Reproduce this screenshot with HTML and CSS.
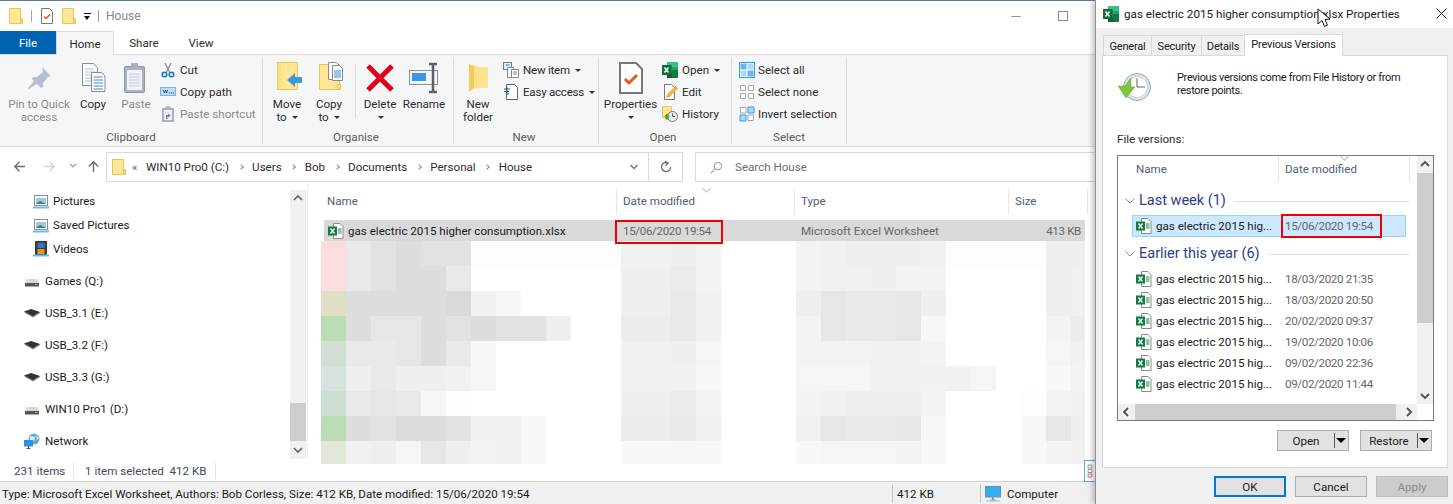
FILE: index.html
```html
<!DOCTYPE html>
<html lang="en">
<head>
<meta charset="utf-8">
<title>House</title>
<link rel="stylesheet" href="styles.css">
</head>
<body>
<svg class="sprite" xmlns="http://www.w3.org/2000/svg">
  <symbol id="folder" viewBox="0 0 16 16"><path d="M1.500 .5h11v15h-11z" fill="#ffe694" stroke="#e6c65a"/><path d="M12.500 10.500h2v5h-2z" fill="#fbd976" stroke="#e6c65a"/></symbol>
  <symbol id="checkdoc" viewBox="0 0 16 16"><path d="M2.500 .5h8l3 3v12h-11z" fill="#fff" stroke="#777"/><path d="M5 8.500l2 2 4-4" fill="none" stroke="#e8561c" stroke-width="1.500"/></symbol>
  <symbol id="xl" viewBox="0 0 16 16"><path d="M5.500 .5h6.500l3 3v12h-9.500z" fill="#fff" stroke="#8a8a8a"/><path d="M10 6h3.500M10 8h3.500M10 10h3.500" stroke="#2a7a4a"/><rect x="0" y="3.500" width="9" height="9" fill="#107c41"/><path d="M2.500 5.500l4 5m0-5l-4 5" stroke="#fff" stroke-width="1.300"/></symbol>
  <symbol id="pin" viewBox="0 0 32 32"><path d="M19 5l9 9-3 1-5 6 0 4-2 1-9-9 1-2 4 0 6-5z" fill="#b4bfd2"/><path d="M12 18l3 3-9 6-1-1z" fill="#b4bfd2"/></symbol>
  <symbol id="copydoc" viewBox="-4 0 32 32"><path d="M1.500 1.500h11l4 4v18h-15z" fill="#fff" stroke="#8a8a8a"/><path d="M4 7h8M4 10h10M4 13h10M4 16h10M4 19h10" stroke="#9ebde8"/><path d="M10.500 10.500h10l3.500 3.500v15.500h-13.500z" fill="#fff" stroke="#8a8a8a"/><path d="M12.500 15h9M12.500 18h9.500M12.500 21h9.500M12.500 24h9.500M12.500 27h9.500" stroke="#3a86e0"/></symbol>
  <symbol id="paste" viewBox="0 0 32 32"><rect x="4.500" y="4.500" width="20" height="26" rx="1" fill="#a9b2c4" stroke="#8f98aa"/><rect x="7" y="8" width="15" height="20" fill="#f0f2f6"/><path d="M9 12h11M9 15h11M9 18h11M9 21h11M9 24h11" stroke="#c5cde0"/><rect x="11" y="1" width="7" height="5" fill="#a9b2c4"/></symbol>
  <symbol id="cut" viewBox="0 0 16 16"><path d="M5 1l4.500 9M11 1L6.500 10" stroke="#8a8a8a" stroke-width="1.300" fill="none"/><circle cx="4.500" cy="12.500" r="2.300" fill="none" stroke="#1a6fc0" stroke-width="1.500"/><circle cx="11.500" cy="12.500" r="2.300" fill="none" stroke="#1a6fc0" stroke-width="1.500"/></symbol>
  <symbol id="path" viewBox="0 0 16 16"><rect x=".5" y="3.500" width="15" height="8" fill="#bcdcf5" stroke="#7fb4e0"/><path d="M3 6l1.500 3 1-3 1 3 1-3" fill="none" stroke="#333" stroke-width=".8"/><path d="M9 9h1M11 9h1M13 9h1" stroke="#333"/></symbol>
  <symbol id="pshort" viewBox="0 0 16 16"><rect x="2" y="2" width="12" height="14" fill="#a9b2c4"/><rect x="4" y="4" width="8" height="10" fill="#eef0f5"/><rect x="5.500" y="0.500" width="5" height="3" fill="#a9b2c4"/><path d="M6 13V9h2V7.500L11 9.500 8 11.500V10.500H7.500V13z" fill="#6d86a8"/></symbol>
  <symbol id="moveto" viewBox="-5 0 32 32"><path d="M1.500 .5h20v27h-20z" fill="#ffe694" stroke="#e6c65a"/><path d="M4 1v26" stroke="#f2d46f"/><path d="M11 18l8-7v4h7v6h-7v4z" fill="#3f97dc"/></symbol>
  <symbol id="copyto" viewBox="-5 0 32 32"><path d="M1.500 2.500h20v25h-20z" fill="#ffe694" stroke="#e6c65a"/><path d="M19.500 22.500h3v5h-3z" fill="#fbd976" stroke="#e6c65a"/><path d="M10.500 .5h8l3 3v14h-11z" fill="#fff" stroke="#8a8a8a"/><path d="M14.500 3.500h7l3 3v12h-10z" fill="#fff" stroke="#8a8a8a"/><path d="M16 9h7M16 11h7M16 13h7M16 15h7" stroke="#3a86e0"/></symbol>
  <symbol id="del" viewBox="0 0 32 32"><path d="M4 4l24 24M28 4L4 28" stroke="#e0001b" stroke-width="5"/></symbol>
  <symbol id="rename" viewBox="0 0 32 32"><rect x="1.500" y="8.500" width="28" height="14" fill="#f4f6f9" stroke="#8a8f96"/><rect x="4" y="11" width="14" height="8" fill="#3c96e6"/><path d="M21 2h8M25 2v28M21 30h8" stroke="#5a5f66" stroke-width="2.500" fill="none"/></symbol>
  <symbol id="newfolder" viewBox="0 0 32 32"><path d="M7 2l10 3h8v21h-13l-5 3z" fill="#fcd878"/><path d="M12 5h14v21H12z" fill="#ffe290"/><path d="M7 2l5 3v21l-5 4z" fill="#f6c95f"/></symbol>
  <symbol id="newitem" viewBox="0 0 16 16"><rect x=".5" y=".5" width="8" height="7" fill="#dcecf8" stroke="#5b87a8"/><path d="M3 3h3" stroke="#3b6f95"/><path d="M4.500 5.500h6v10h-6z" fill="#f4f4f4" stroke="#8a8a8a"/><path d="M8.500 7.500h7v8h-7z" fill="#fff" stroke="#8a8a8a"/><path d="M10 10h4M10 12h4" stroke="#c96b6b"/></symbol>
  <symbol id="easy" viewBox="0 0 16 16"><path d="M3.500 .5h8l3 3v12h-11z" fill="#fff" stroke="#666"/><path d="M1 5h6M1 7.500h5M3 10h3M4 3v7" stroke="#1d5fa8"/></symbol>
  <symbol id="xlbig" viewBox="0 0 16 16"><rect x="5" y="0" width="11" height="16" fill="#21a366"/><rect x="5" y="0" width="11" height="5" fill="#33c481"/><rect x="10" y="8" width="6" height="8" fill="#107c41"/><rect x="5" y="11" width="5" height="5" fill="#185c37"/><rect x="0" y="3" width="9.500" height="10" fill="#0f6e3a"/><path d="M2.500 5.500l4 5m0-5l-4 5" stroke="#fff" stroke-width="1.500"/></symbol>
  <symbol id="edit" viewBox="0 0 16 16"><path d="M2.500 .5h7l3 3v12h-10z" fill="#fff" stroke="#777"/><path d="M4.500 13.500l1-3 8-8 2 2-8 8z" fill="#f5b93d" stroke="#c89020" stroke-width=".6"/></symbol>
  <symbol id="hist" viewBox="0 0 16 16"><path d="M.5 .5h9v11h-9z" fill="#ffe694" stroke="#e6c65a"/><circle cx="10.500" cy="10.500" r="5" fill="#e9ecef" stroke="#777"/><path d="M10.500 7.500v3h2.500" stroke="#555" fill="none"/><path d="M2 10.500l3-3 3 3H6.500v3h-3v-3z" fill="#3aa52a"/></symbol>
  <symbol id="selall" viewBox="0 0 16 16"><rect x=".5" y=".5" width="15" height="15" fill="#fff" stroke="#3a9ae6"/><rect x="1.500" y="1.500" width="6" height="6" fill="#66b4f0"/><rect x="8.500" y="1.500" width="6" height="6" fill="#a8d8fa"/><rect x="1.500" y="8.500" width="6" height="6" fill="#a8d8fa"/><rect x="8.500" y="8.500" width="6" height="6" fill="#66b4f0"/></symbol>
  <symbol id="selnone" viewBox="0 0 16 16"><path d="M1.500 1.500h5v5h-5zM9.500 1.500h5v5h-5zM1.500 9.500h5v5h-5zM9.500 9.500h5v5h-5z" fill="#fff" stroke="#a8a8a8"/></symbol>
  <symbol id="selinv" viewBox="0 0 16 16"><path d="M1.500 1.500h5.500v5.500h-5.500zM9 9h5.500v5.500H9z" fill="#fff" stroke="#a8a8a8"/><path d="M9 1h6v6H9zM1 9h6v6H1z" fill="#a8d8fa" stroke="#3a9ae6"/></symbol>
  <symbol id="pics" viewBox="0 0 16 16"><rect x="1.500" y="2.500" width="13" height="10" fill="#fff" stroke="#8a8f96"/><path d="M3 5h10v6H3z" fill="#9cc8e8"/><path d="M3 11l4-3 6 3z" fill="#4d7b5f"/><path d="M0 13.500h16v2H0z" fill="#6db8ef"/></symbol>
  <symbol id="vid" viewBox="0 0 16 16"><rect x="2" y="0" width="12" height="14" fill="#3d3d3d"/><rect x="4.500" y="2" width="7" height="5" fill="#2d78c8"/><rect x="4.500" y="8" width="7" height="5" fill="#e09a20"/><path d="M0 13.500h16v2H0z" fill="#6db8ef"/></symbol>
  <symbol id="hdd" viewBox="0 0 16 16"><path d="M2 6h12l1 4v3H1v-3z" fill="#d8d8d8"/><path d="M1 10h14v3.500H1z" fill="#555"/><path d="M11 11.500h2" stroke="#6fe06f"/></symbol>
  <symbol id="usb" viewBox="0 0 16 16"><path d="M0 6.500L7 4l9 3-7 4.500z" fill="#333"/><path d="M0 6.500l9 5 7-4.500v1l-7 4.500-8-4.500z" fill="#777"/></symbol>
  <symbol id="net" viewBox="0 0 16 16"><circle cx="10" cy="6" r="5.500" fill="#6fa8d8"/><path d="M6 3l5 1-1 4-4-1zM12 2l3 3-2 2z" fill="#dcecf8"/><rect x="0" y="7" width="9" height="6.500" fill="#2f8fe0"/><path d="M2.500 15.500h4M4.500 13v2" stroke="#555"/></symbol>
  <symbol id="pc" viewBox="0 0 16 16"><rect x=".5" y=".5" width="15" height="10.500" fill="#35aef0" stroke="#6a8ea8"/><path d="M5 13.500h6v1H5zM7 11h2v3H7z" fill="#8a9aa8"/><path d="M1 14.500h14v1H1z" fill="#a8b4c0"/></symbol>
  <symbol id="restore" viewBox="0 0 34 30"><circle cx="20" cy="15" r="13.500" fill="#dfe4e8" stroke="#9aa5ae"/><circle cx="20" cy="15" r="10.500" fill="#fff" stroke="#c8d0d6"/><path d="M20 6v9h8" stroke="#666" fill="none"/><path d="M1 14h7l6-8v9l4 0-9 11z" fill="#7cc63e" stroke="#5aa622" stroke-width=".5"/></symbol>
  <symbol id="cursor" viewBox="0 0 14 20"><path d="M1 1v15l4-3.500 2.500 6 3-1.300-2.500-5.700 5-.5z" fill="#fff" stroke="#111"/></symbol>
</svg>

<div class="desktop">
  <section class="explorer">
    <header class="qat">
      <svg class="i16 qat-first"><use href="#folder"/></svg>
      <span class="qat-sep"></span>
      <svg class="i16"><use href="#checkdoc"/></svg>
      <svg class="i16 qat-folder"><use href="#folder"/></svg>
      <span class="qat-more"></span>
      <span class="qat-sep"></span>
      <span class="qat-title">House</span>
      <span class="win-min"></span>
      <span class="win-max"></span>
    </header>
    <nav class="tabs">
      <span class="tab-file">File</span>
      <span class="tab tab-active">Home</span>
      <span class="tab tab-share">Share</span>
      <span class="tab tab-view">View</span>
    </nav>
    <div class="ribbon">
      <div class="group g-clip">
        <div class="group-body">
          <div class="big w70 off"><svg class="i32"><use href="#pin"/></svg><span>Pin to Quick<br>access</span></div>
          <div class="big w38"><svg class="i32"><use href="#copydoc"/></svg><span>Copy</span></div>
          <div class="big w48 off"><svg class="i32"><use href="#paste"/></svg><span>Paste</span></div>
          <div class="small-col">
            <div class="small"><svg class="i16"><use href="#cut"/></svg><span>Cut</span></div>
            <div class="small"><svg class="i16"><use href="#path"/></svg><span>Copy path</span></div>
            <div class="small off"><svg class="i16"><use href="#pshort"/></svg><span>Paste shortcut</span></div>
          </div>
        </div>
        <div class="group-label">Clipboard</div>
      </div>
      <div class="group g-org">
        <div class="group-body">
          <div class="big w48"><svg class="i32"><use href="#moveto"/></svg><span>Move<br>to <i class="caret"></i></span></div>
          <div class="big w36"><svg class="i32"><use href="#copyto"/></svg><span>Copy<br>to <i class="caret"></i></span></div>
          <span class="inner-sep"></span>
          <div class="big w46"><svg class="i32"><use href="#del"/></svg><span>Delete<br><i class="caret"></i></span></div>
          <div class="big w42"><svg class="i32"><use href="#rename"/></svg><span>Rename</span></div>
        </div>
        <div class="group-label">Organise</div>
      </div>
      <div class="group g-new">
        <div class="group-body">
          <div class="big w48"><svg class="i32"><use href="#newfolder"/></svg><span>New<br>folder</span></div>
          <div class="small-col">
            <div class="small"><svg class="i16"><use href="#newitem"/></svg><span>New item <i class="caret"></i></span></div>
            <div class="small"><svg class="i16"><use href="#easy"/></svg><span>Easy access <i class="caret"></i></span></div>
          </div>
        </div>
        <div class="group-label">New</div>
      </div>
      <div class="group g-open">
        <div class="group-body">
          <div class="big w63"><svg class="i32"><use href="#checkdoc"/></svg><span>Properties<br><i class="caret"></i></span></div>
          <div class="small-col">
            <div class="small"><svg class="i16"><use href="#xlbig"/></svg><span>Open <i class="caret"></i></span></div>
            <div class="small"><svg class="i16"><use href="#edit"/></svg><span>Edit</span></div>
            <div class="small"><svg class="i16"><use href="#hist"/></svg><span>History</span></div>
          </div>
        </div>
        <div class="group-label">Open</div>
      </div>
      <div class="group g-sel">
        <div class="group-body">
          <div class="small-col">
            <div class="small"><svg class="i16"><use href="#selall"/></svg><span>Select all</span></div>
            <div class="small"><svg class="i16"><use href="#selnone"/></svg><span>Select none</span></div>
            <div class="small"><svg class="i16"><use href="#selinv"/></svg><span>Invert selection</span></div>
          </div>
        </div>
        <div class="group-label">Select</div>
      </div>
    </div>

    <div class="navbar">
      <svg class="nav-ic nav-back" viewBox="0 0 14 14"><path d="M13 7H2M7 2L2 7l5 5" fill="none" stroke="#6d6d6d" stroke-width="1.500"/></svg>
      <svg class="nav-ic nav-fwd" viewBox="0 0 14 14"><path d="M1 7h11M7 2l5 5-5 5" fill="none" stroke="#d4d4d4" stroke-width="1.500"/></svg>
      <svg class="nav-chev" viewBox="0 0 8 8"><path d="M1 2l3 3 3-3" fill="none" stroke="#9a9a9a" stroke-width="1.200"/></svg>
      <svg class="nav-ic nav-up" viewBox="0 0 14 14"><path d="M7 13V2M2 7l5-5 5 5" fill="none" stroke="#6d6d6d" stroke-width="1.500"/></svg>
      <div class="address">
        <svg class="i16 addr-folder"><use href="#folder"/></svg>
        <span class="addr-more">«</span>
        <span class="crumb c1">WIN10 Pro0 (C:)</span><i class="sep-arrow"></i>
        <span class="crumb">Users</span><i class="sep-arrow"></i>
        <span class="crumb">Bob</span><i class="sep-arrow"></i>
        <span class="crumb">Documents</span><i class="sep-arrow"></i>
        <span class="crumb">Personal</span><i class="sep-arrow"></i>
        <span class="crumb">House</span>
        <span class="addr-end">
          <svg class="addr-drop" viewBox="0 0 8 8"><path d="M.5 2L4 5.500 7.500 2" fill="none" stroke="#777" stroke-width="1.400"/></svg>
        </span>
        <span class="addr-refresh">
          <svg viewBox="0 0 14 14"><path d="M11.500 7a4.500 4.500 0 1 1-2-3.700M6 1l3 2.300L6.500 5.500" fill="none" stroke="#666" stroke-width="1.300"/></svg>
        </span>
      </div>
      <div class="search">
        <svg class="search-ic" viewBox="0 0 14 14"><circle cx="8.500" cy="5.500" r="4" fill="none" stroke="#8a8a8a"/><path d="M5.500 8.500L1 13" stroke="#c58aa0" stroke-width="1.200"/></svg>
        <span>Search House</span>
      </div>
    </div>

    <div class="main">
      <aside class="sidebar">
        <ul class="tree">
          <li class="lvl2"><svg class="i16"><use href="#pics"/></svg>Pictures</li>
          <li class="lvl2"><svg class="i16"><use href="#pics"/></svg>Saved Pictures</li>
          <li class="lvl2"><svg class="i16"><use href="#vid"/></svg>Videos</li>
          <li class="lvl1"><svg class="i16"><use href="#hdd"/></svg>Games (Q:)</li>
          <li class="lvl1"><svg class="i16"><use href="#usb"/></svg>USB_3.1 (E:)</li>
          <li class="lvl1"><svg class="i16"><use href="#usb"/></svg>USB_3.2 (F:)</li>
          <li class="lvl1"><svg class="i16"><use href="#usb"/></svg>USB_3.3 (G:)</li>
          <li class="lvl1"><svg class="i16"><use href="#hdd"/></svg>WIN10 Pro1 (D:)</li>
          <li class="lvl1"><svg class="i16"><use href="#net"/></svg>Network</li>
        </ul>
        <div class="side-scroll">
          <svg class="sb-btn" viewBox="0 0 16 17"><path d="M4 10l4-4 4 4" fill="none" stroke="#606060" stroke-width="1.600"/></svg>
          <span class="sb-space"></span>
          <span class="sb-thumb"></span>
          <svg class="sb-btn sb-down" viewBox="0 0 16 18"><path d="M4 7l4 4 4-4" fill="none" stroke="#606060" stroke-width="1.600"/></svg>
        </div>
      </aside>
      <div class="files">
        <div class="cols">
          <span class="col c-name">Name</span>
          <span class="col c-date">Date modified<svg class="sort" viewBox="0 0 9 5"><path d="M.5 .5L4.500 4 8.500 .5" fill="none" stroke="#a0a0a0"/></svg></span>
          <span class="col c-type">Type</span>
          <span class="col c-size">Size</span>
        </div>
        <div class="file-row">
          <span class="f-name"><svg class="i16"><use href="#xl"/></svg>gas electric 2015 higher consumption.xlsx</span>
          <span class="f-date num">15/06/2020 19:54<b class="redbox rb-main"></b></span>
          <span class="f-type">Microsoft Excel Worksheet</span>
          <span class="f-size num">413 KB</span>
        </div>
        <div class="mosaic">
          <i class="r1"></i><i class="k"></i><i class="e"></i><i class="d"></i><i class="e"></i><i class="e"></i><i class="w"></i><i class="w"></i><i class="w"></i><i class="w"></i><i class="w"></i><i class="w"></i><i class="h"></i><i class="h"></i><i class="g"></i><i class="j"></i><i></i><i></i><i></i><i class="j"></i><i class="h"></i><i class="g"></i><i class="g"></i><i class="g"></i><i class="h"></i><i class="w"></i><i class="w"></i><i class="w"></i><i class="w"></i><i class="g"></i><i class="g"></i>
          <i class="r1"></i><i class="k"></i><i class="e"></i><i class="d"></i><i class="d"></i><i class="k"></i><i></i><i></i><i></i><i></i><i></i><i></i><i class="g"></i><i class="g"></i><i class="f"></i><i class="j"></i><i></i><i></i><i></i><i class="j"></i><i class="h"></i><i class="h"></i><i class="g"></i><i class="j"></i><i class="j"></i><i></i><i></i><i></i><i></i><i class="g"></i><i class="h"></i>
          <i class="y1"></i><i class="d"></i><i class="d"></i><i class="d"></i><i class="d"></i><i class="c"></i><i class="h"></i><i class="m"></i><i></i><i></i><i></i><i></i><i class="g"></i><i class="g"></i><i class="k"></i><i class="h"></i><i></i><i></i><i></i><i class="g"></i><i class="l"></i><i class="k"></i><i class="k"></i><i class="l"></i><i class="g"></i><i></i><i></i><i></i><i></i><i class="g"></i><i class="h"></i>
          <i class="g1"></i><i class="d"></i><i class="l"></i><i class="l"></i><i class="d"></i><i class="e"></i><i class="d"></i><i class="e"></i><i class="e"></i><i class="g"></i><i></i><i></i><i class="f"></i><i class="f"></i><i class="k"></i><i class="h"></i><i></i><i></i><i></i><i class="j"></i><i class="l"></i><i class="k"></i><i class="k"></i><i class="l"></i><i class="n"></i><i></i><i></i><i></i><i></i><i class="j"></i><i class="f"></i>
          <i class="g2"></i><i class="k"></i><i class="k"></i><i class="l"></i><i class="d"></i><i class="k"></i><i class="m"></i><i></i><i></i><i></i><i></i><i></i><i class="h"></i><i class="h"></i><i class="g"></i><i class="o"></i><i></i><i></i><i></i><i class="j"></i><i class="j"></i><i class="j"></i><i class="h"></i><i class="h"></i><i class="j"></i><i></i><i></i><i></i><i></i><i class="o"></i><i class="h"></i>
          <i class="g3"></i><i class="g"></i><i class="k"></i><i class="g"></i><i class="g"></i><i class="h"></i><i class="n"></i><i></i><i></i><i></i><i></i><i></i><i class="h"></i><i class="h"></i><i class="h"></i><i class="n"></i><i></i><i></i><i></i><i class="o"></i><i class="o"></i><i class="o"></i><i class="h"></i><i class="h"></i><i class="h"></i><i class="h"></i><i class="o"></i><i></i><i></i><i class="m"></i><i class="j"></i>
          <i class="g4"></i><i class="k"></i><i class="l"></i><i class="k"></i><i class="o"></i><i class="w"></i><i></i><i></i><i></i><i></i><i></i><i></i><i class="g"></i><i class="g"></i><i class="f"></i><i class="j"></i><i></i><i></i><i></i><i class="j"></i><i class="h"></i><i class="g"></i><i class="g"></i><i class="g"></i><i class="j"></i><i></i><i></i><i></i><i class="w"></i><i class="j"></i><i class="h"></i>
          <i class="g1"></i><i class="d"></i><i class="e"></i><i class="d"></i><i class="d"></i><i class="e"></i><i class="h"></i><i class="h"></i><i class="m"></i><i></i><i></i><i></i><i class="f"></i><i class="f"></i><i class="k"></i><i class="h"></i><i></i><i></i><i></i><i class="h"></i><i class="l"></i><i class="k"></i><i class="k"></i><i class="l"></i><i class="n"></i><i></i><i></i><i></i><i class="m"></i><i class="l"></i><i class="g"></i>
          <i class="g5"></i><i class="h"></i><i class="g"></i><i class="o"></i><i class="l"></i><i class="g"></i><i class="j"></i><i class="h"></i><i class="m"></i><i></i><i></i><i></i><i class="m"></i><i class="m"></i><i class="n"></i><i class="m"></i><i></i><i></i><i></i><i class="m"></i><i class="o"></i><i class="o"></i><i class="o"></i><i class="j"></i><i class="m"></i><i></i><i></i><i></i><i class="m"></i><i class="j"></i><i class="h"></i>
        </div>
      </div>
    </div>

    <div class="infobar">
      <span class="info-a">231 items</span>
      <span class="info-b">1 item selected&nbsp; 412 KB</span>
      <span class="grip"><svg viewBox="0 0 6 14"><path d="M1 1h4v3H1zM1 5.500h4v3H1z" fill="#fff" stroke="#777" stroke-width=".7"/><path d="M1 10h4v3H1z" fill="#fff" stroke="#c33" stroke-width=".7"/></svg></span>
    </div>
    <footer class="status">
      <span class="st-main">Type: Microsoft Excel Worksheet, Authors: Bob Corless, Size: 412 KB, Date modified: 15/06/2020 19:54</span>
      <span class="st-size">412 KB</span>
      <span class="st-pc"><svg class="i16"><use href="#pc"/></svg>Computer</span>
    </footer>
  </section>

  <section class="dialog">
    <header class="d-title">
      <svg class="i16"><use href="#xlbig"/></svg>
      <span class="d-name">gas electric 2015 higher consumption.xlsx Properties</span>
      <svg class="d-close" viewBox="0 0 11 11"><path d="M.5 .5l10 10m0-10l-10 10" stroke="#222"/></svg>
    </header>
    <div class="d-tabs">
      <span class="d-tab t1">General</span>
      <span class="d-tab t2">Security</span>
      <span class="d-tab t3">Details</span>
      <span class="d-tab d-active">Previous Versions</span>
    </div>
    <div class="d-panel">
      <div class="d-intro">
        <svg class="d-clock"><use href="#restore"/></svg>
        <p>Previous versions come from File History or from<br>restore points.</p>
      </div>
      <div class="d-label">File versions:</div>
      <div class="vbox">
        <div class="vlist">
          <div class="v-head">
            <span class="vh-name">Name</span>
            <span class="vh-date">Date modified<svg class="sort sort-d" viewBox="0 0 9 5"><path d="M.5 .5L4.500 4 8.500 .5" fill="none" stroke="#a0a0a0"/></svg></span>
          </div>
          <div class="v-group vg-first"><svg class="v-chev" viewBox="0 0 10 6"><path d="M.5 .5L5 5 9.500 .5" fill="none" stroke="#8a8a8a"/></svg><span>Last week (1)</span><i></i></div>
          <div class="v-row v-sel"><svg class="i16"><use href="#xl"/></svg><span class="v-n">gas electric 2015 hig...</span><span class="v-d num">15/06/2020 19:54<b class="redbox rb-d"></b></span></div>
          <div class="v-group"><svg class="v-chev" viewBox="0 0 10 6"><path d="M.5 .5L5 5 9.500 .5" fill="none" stroke="#8a8a8a"/></svg><span>Earlier this year (6)</span><i></i></div>
          <div class="v-rows">
            <div class="v-row"><svg class="i16"><use href="#xl"/></svg><span class="v-n">gas electric 2015 hig...</span><span class="v-d num">18/03/2020 21:35</span></div>
            <div class="v-row"><svg class="i16"><use href="#xl"/></svg><span class="v-n">gas electric 2015 hig...</span><span class="v-d num">18/03/2020 20:50</span></div>
            <div class="v-row"><svg class="i16"><use href="#xl"/></svg><span class="v-n">gas electric 2015 hig...</span><span class="v-d num">20/02/2020 09:37</span></div>
            <div class="v-row"><svg class="i16"><use href="#xl"/></svg><span class="v-n">gas electric 2015 hig...</span><span class="v-d num">19/02/2020 10:06</span></div>
            <div class="v-row"><svg class="i16"><use href="#xl"/></svg><span class="v-n">gas electric 2015 hig...</span><span class="v-d num">09/02/2020 22:36</span></div>
            <div class="v-row"><svg class="i16"><use href="#xl"/></svg><span class="v-n">gas electric 2015 hig...</span><span class="v-d num">09/02/2020 11:44</span></div>
          </div>
        </div>
        <div class="v-vbar">
          <svg class="vb-btn" viewBox="0 0 16 17"><path d="M4 10l4-4 4 4" fill="none" stroke="#505050" stroke-width="1.800"/></svg>
          <span class="vb-thumb"></span>
          <svg class="vb-btn vb-end" viewBox="0 0 16 17"><path d="M4 7l4 4 4-4" fill="none" stroke="#505050" stroke-width="1.800"/></svg>
        </div>
        <div class="v-hbar">
          <svg class="hb-btn" viewBox="0 0 17 16"><path d="M10 4L6 8l4 4" fill="none" stroke="#505050" stroke-width="1.800"/></svg>
          <span class="hb-thumb"></span>
          <svg class="hb-btn hb-end" viewBox="0 0 17 16"><path d="M7 4l4 4-4 4" fill="none" stroke="#505050" stroke-width="1.800"/></svg>
        </div>
        <span class="v-corner"></span>
      </div>
      <div class="d-split">
        <span class="btn split"><span class="btn-text">Open</span><i class="split-sep"></i><i class="split-arrow"></i></span>
        <span class="btn split"><span class="btn-text">Restore</span><i class="split-sep"></i><i class="split-arrow"></i></span>
      </div>
    </div>
    <div class="d-actions">
      <span class="btn btn-ok">OK</span>
      <span class="btn">Cancel</span>
      <span class="btn btn-off">Apply</span>
    </div>
    <svg class="mouse"><use href="#cursor"/></svg>
  </section>
</div>
</body>
</html>
```
FILE: styles.css
```css
* { box-sizing: border-box; }
html, body { margin: 0; padding: 0; background: #fff; }
body { font: 11.600px/16px Roboto, "Liberation Sans", sans-serif; color: #1a1a1a; overflow: hidden; }
.sprite { position: absolute; width: 0; height: 0; }
svg { display: block; flex: none; }
.i16 { width: 16px; height: 16px; }
.i32 { width: 32px; height: 32px; }
.num { letter-spacing: -.35px; }

.desktop { display: flex; width: 1453px; height: 504px; overflow: hidden; }
.explorer { width: 1095px; height: 504px; display: flex; flex-direction: column; border-top: 1px solid #5a7a9a; flex: none; }

/* quick access bar */
.qat { height: 30px; display: flex; align-items: center; padding-left: 8px; }
.qat-sep { width: 1px; height: 12px; background: #a0a0a0; margin: 0 7px; }
.qat-first { margin-right: 0; }
.qat-folder { margin-left: 6px; }
.qat-more { width: 7px; height: 6px; margin-left: 7px; border-top: 1px solid #000; position: relative; }
.qat-more::after { content: ""; position: absolute; left: 0; top: 2px; border: 3.500px solid transparent; border-top: 4px solid #000; border-bottom: 0; }
.qat-title { color: #8a8a8a; font-size: 12px; }
.win-min { width: 10px; height: 1px; background: #9a9a9a; margin-left: auto; }
.win-max { width: 10px; height: 10px; border: 1px solid #8a8a8a; margin: 0 27px 0 37px; }

/* tabs */
.tabs { height: 24px; display: flex; align-items: stretch; border-bottom: 1px solid #dadbdc; }
.tab-file { width: 56px; background: #0063b1; color: #fff; text-align: center; line-height: 24px; }
.tab { line-height: 24px; text-align: center; color: #2b2b2b; }
.tab-active { width: 58px; background: #f5f6f7; border: 1px solid #dadbdc; border-bottom: 0; height: 24px; }
.tab-share { width: 60px; }
.tab-view { width: 54px; }

/* ribbon */
.ribbon { height: 92px; background: #f5f6f7; border-bottom: 1px solid #dadbdc; display: flex; padding-top: 2px; }
.group { display: flex; flex-direction: column; height: 87px; border-right: 1px solid #dadbdc; }
.g-clip { width: 263px; padding-left: 4px; }
.g-org { width: 191px; }
.g-new { width: 145px; }
.g-open { width: 133px; }
.g-sel { width: 115px; padding-left: 7px; }
.group-body { flex: 1; display: flex; }
.group-label { height: 18px; line-height: 22px; text-align: center; color: #5a5a5a; margin-left: -4px; }
.g-sel .group-label { margin-left: -7px; }
.big { display: flex; flex-direction: column; align-items: center; padding-top: 5px; text-align: center; line-height: 13px; color: #2b2b2b; }
.big span { margin-top: 4px; }
.big.off, .small.off { color: #8a8a8a; }
.w70 { width: 70px; } .w38 { width: 38px; } .w48 { width: 48px; } .w36 { width: 36px; } .w46 { width: 46px; } .w42 { width: 42px; } .w63 { width: 63px; }
.inner-sep { width: 1px; height: 54px; margin: 7px 1px 0 8px; background: #dadbdc; }
.small-col { display: flex; flex-direction: column; padding-top: 2px; }
.g-new .small-col { margin-left: 1px; }
.g-new .small span { letter-spacing: -.25px; }
.g-sel .small { gap: 3px; }
.small { height: 22px; display: flex; align-items: center; gap: 4px; color: #2b2b2b; white-space: nowrap; }
.caret { display: inline-block; width: 0; height: 0; margin-left: 2px; vertical-align: middle; border: 3px solid transparent; border-top: 3px solid #333; border-bottom: 0; }

/* navigation */
.navbar { height: 32px; margin-top: 4px; display: flex; align-items: flex-start; position: relative; }
.nav-ic { width: 13px; height: 13px; margin-top: 9px; }
.nav-back { margin-left: 13px; }
.nav-fwd { margin-left: 17px; }
.nav-chev { width: 8px; height: 8px; margin: 11px 0 0 13px; }
.nav-up { margin-left: 10px; }
.address { width: 577px; height: 30px; margin: 1px 0 0 6px; border: 1px solid #d9d9d9; display: flex; align-items: center; padding-left: 4px; white-space: nowrap; color: #2b2b2b; }
.addr-more { margin-left: 5px; width: 10px; color: #555; }
.crumb.c1 { margin-left: 4px; }
.sep-arrow { width: 4px; height: 4px; margin: 0 9.500px; border-top: 1px solid #8a8a8a; border-right: 1px solid #8a8a8a; transform: rotate(45deg); }
.addr-end { margin-left: auto; width: 30px; height: 28px; border-right: 1px solid #d9d9d9; display: flex; align-items: center; justify-content: center; }
.addr-drop { width: 8px; height: 8px; }
.addr-refresh { width: 33px; display: flex; justify-content: center; }
.addr-refresh svg { width: 14px; height: 14px; }
.search { flex: 1; height: 30px; margin: 1px 0 0 12px; border: 1px solid #d9d9d9; border-right: 0; display: flex; align-items: center; padding-left: 14px; color: #6d6d6d; gap: 12px; }
.search-ic { width: 13px; height: 13px; }

/* main */
.main { flex: 1; display: flex; min-height: 0; }
.sidebar { width: 306px; display: flex; padding-top: 6px; flex: none; }
.tree { flex: 1; list-style: none; margin: 0; padding: 0; }
.tree li { height: 24px; display: flex; align-items: center; gap: 5px; white-space: nowrap; color: #1a1a1a; }
.lvl2 { padding-left: 33px; gap: 4px !important; }
.lvl1 { padding-left: 24px; margin-top: 8px; }
.side-scroll { width: 16px; height: 269px; background: #f0f0f0; display: flex; flex-direction: column; margin-top: 1px; }
.sb-btn { width: 16px; height: 17px; }
.sb-down { height: 18px; }
.sb-space { flex: 1; }
.sb-thumb { height: 38px; background: #cdcdcd; }

/* file list */
.files { width: 789px; margin-left: 1px; padding: 6px 0 0 13px; border-left: 1px solid #f0f0f0; position: relative; }
.cols { display: flex; height: 25px; color: #4c607a; }
.col { line-height: 24px; padding-left: 6px; position: relative; white-space: nowrap; }
.c-name { width: 295px; }
.c-date { width: 178px; border-left: 1px solid #e5e5e5; }
.c-type { width: 214px; border-left: 1px solid #e5e5e5; }
.c-size { width: 80px; border-left: 1px solid #e5e5e5; border-right: 1px solid #e5e5e5; }
.sort { width: 9px; height: 5px; position: absolute; left: 85px; top: -1px; }
.file-row { display: flex; height: 21px; margin: 6px 0 0 3px; width: 761px; background: #d9d9d9; align-items: center; white-space: nowrap; color: #666; }
.f-name { width: 299px; display: flex; align-items: center; gap: 4px; padding-left: 4px; color: #1a1a1a; }
.f-date { width: 178px; position: relative; }
.f-type { width: 214px; }
.f-size { width: 70px; text-align: right; padding-right: 4px; }
.redbox { position: absolute; border: 2px solid #ed0000; display: block; }
.rb-main { left: -8px; top: -3px; width: 108px; height: 24px; }
.mosaic { display: grid; grid-template-columns: repeat(30, 25px) 14px; grid-auto-rows: 25px; height: 223px; overflow: hidden; }
.mosaic i { display: block; }
.r1 { background: #fcdcdc; } .y1 { background: #dfdfc8; } .g1 { background: #bcdcb4; } .g2 { background: #d0ded4; } .g3 { background: #d5e3dc; } .g4 { background: #cddfd2; } .g5 { background: #e2e8d9; }
.c { background: #d9d9d9; } .d { background: #dddddd; } .e { background: #e2e2e2; } .l { background: #e6e6e6; } .k { background: #e9e9e9; } .f { background: #ececec; } .g { background: #efefef; } .h { background: #f1f1f1; } .j { background: #f3f3f3; } .o { background: #f5f5f5; } .m { background: #f8f8f8; } .n { background: #f7f7f7; } .w { background: #fdfdfd; }

/* info + status bars */
.infobar { height: 21px; display: flex; align-items: center; color: #3c4a60; position: relative; padding-left: 14px; }
.info-a { width: 60px; height: 16px; border-right: 1px solid #e5e5e5; }
.info-b { margin-left: 11px; width: 131px; height: 16px; border-right: 1px solid #e5e5e5; white-space: nowrap; }
.grip { position: absolute; right: 0; bottom: -1px; width: 11px; height: 22px; border: 1px solid #5aa8de; border-right: 0; display: flex; align-items: center; justify-content: center; }
.grip svg { width: 6px; height: 14px; }
.status { height: 23px; background: #f0f0f0; border-top: 1px solid #cfcfcf; display: flex; align-items: center; padding: 1px 0 0 2px; color: #1a1a1a; white-space: nowrap; }
.st-main { width: 890px; }
.st-size { width: 88px; height: 18px; border-left: 1px solid #c4c4c4; padding-left: 4px; line-height: 18px; }
.st-pc { display: flex; align-items: center; gap: 6px; height: 18px; border-left: 1px solid #c4c4c4; padding-left: 4px; }

/* properties dialog */
.dialog { width: 358px; height: 504px; flex: none; background: #f0f0f0; border-left: 1px solid #8f8f8f; box-shadow: -3px 0 5px rgba(0, 0, 0, .22); display: flex; flex-direction: column; position: relative; }
.d-title { height: 28px; background: #fff; display: flex; align-items: center; padding-left: 7px; gap: 5px; white-space: nowrap; }
.d-name { color: #1a1a1a; font-size: 11.700px; }
.d-close { width: 11px; height: 11px; position: absolute; right: 6px; top: 8px; }
.d-tabs { display: flex; height: 27px; padding: 7px 0 0 7px; align-items: flex-end; }
.d-tab { height: 20px; line-height: 22px; background: #f0f0f0; border: 1px solid #d9d9d9; border-bottom: 0; border-right: 0; text-align: center; color: #1a1a1a; font-size: 11px; letter-spacing: -.2px; }
.t1 { width: 48px; } .t2 { width: 50px; } .t3 { width: 43px; }
.d-active { width: 99px; height: 22px; line-height: 20px; background: #fff; border-right: 1px solid #d9d9d9; margin-bottom: -1px; position: relative; }
.d-panel { width: 346px; height: 413px; margin-left: 6px; background: #fff; border: 1px solid #d9d9d9; padding: 16px 14px 0 14px; }
.d-intro { display: flex; height: 30px; }
.d-clock { width: 34px; height: 30px; }
.d-intro p { margin: -1px 0 0 26px; line-height: 13px; color: #1a1a1a; white-space: nowrap; font-size: 11px; letter-spacing: -.33px; }
.d-label { margin-top: 29px; color: #2b2b2b; }
.vbox { display: grid; grid-template-columns: 299px 16px; grid-template-rows: 248px 16px; width: 317px; height: 266px; margin-top: 8px; border: 1px solid #7a7a7a; }
.vlist { overflow: hidden; background: #fff; }
.v-head { display: flex; height: 25px; color: #4c607a; }
.vh-name { width: 160px; line-height: 26px; padding-left: 18px; }
.vh-date { width: 132px; border-left: 1px solid #e5e5e5; border-right: 1px solid #e5e5e5; padding-left: 6px; line-height: 26px; position: relative; }
.sort-d { left: 61px; top: 0; }
.v-group { display: flex; align-items: center; height: 20px; margin-top: 7px; padding-left: 7px; color: #2a3d8f; font-size: 14.500px; white-space: nowrap; }
.vg-first { margin-top: 10px; }
.v-chev { width: 10px; height: 6px; margin-right: 4px; }
.v-group i { flex: 1; height: 1px; background: #e0e0e0; margin: 0 8px 0 8px; }
.v-row { display: flex; align-items: center; height: 21px; margin-left: 14px; width: 274px; white-space: nowrap; color: #1a1a1a; }
.v-row .i16 { margin-left: 4px; }
.v-n { margin-left: 4px; width: 129px; }
.v-d { color: #666; position: relative; }
.v-sel { height: 22px; margin-top: 4px; background: #cce8ff; border: 1px solid #99d1ff; }
.v-sel .i16 { margin-left: 3px; }
.rb-d { left: -4px; top: -4px; width: 101px; height: 24px; }
.v-rows { margin-top: 4px; }
.v-vbar { background: #f0f0f0; display: flex; flex-direction: column; }
.vb-btn { width: 16px; height: 17px; }
.vb-thumb { height: 150px; background: #cdcdcd; }
.vb-end { margin-top: auto; }
.v-hbar { background: #f0f0f0; display: flex; }
.hb-btn { width: 17px; height: 16px; }
.hb-thumb { width: 261px; background: #cdcdcd; }
.hb-end { margin-left: auto; }
.v-corner { background: #fff; }
.d-split { display: flex; justify-content: flex-end; gap: 11px; margin-top: 9px; margin-right: 1px; }
.btn { width: 72px; height: 21px; background: #e1e1e1; border: 1px solid #adadad; display: flex; align-items: center; justify-content: center; color: #1a1a1a; }
.split { position: relative; padding-right: 14px; }
.split-sep { position: absolute; right: 13px; top: 2px; width: 1px; height: 15px; background: #555; }
.split-arrow { position: absolute; right: 2px; top: 7px; border: 5px solid transparent; border-top: 5px solid #000; border-bottom: 0; }
.d-actions { display: flex; gap: 9px; padding: 8px 0 0 118px; }
.btn-ok { border: 2px solid #0078d7; }
.btn-off { background: #cccccc; color: #8a8a8a; border-color: #bfbfbf; }
.mouse { position: absolute; left: 221px; top: 8px; width: 14px; height: 20px; }
```
